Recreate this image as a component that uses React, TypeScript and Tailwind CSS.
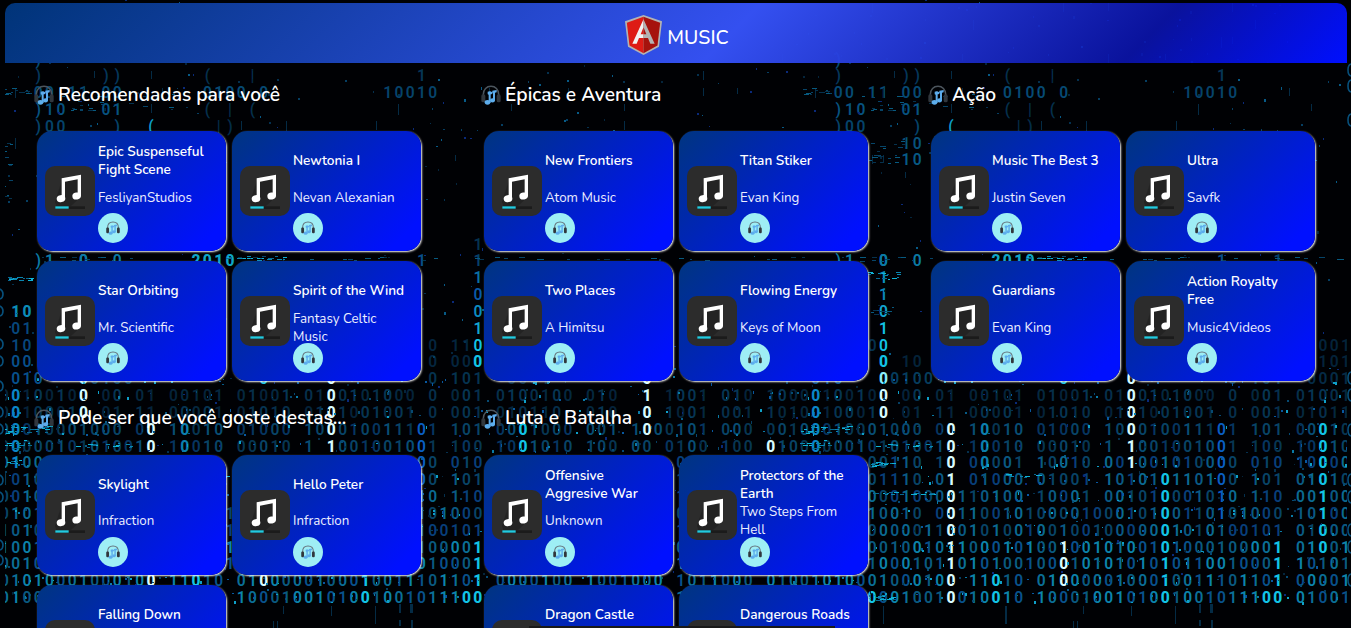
import React from "react";

type Track = { title: string; artist: string };
type Section = { name: string; tracks: Track[] };

const sections: Section[] = [
  {
    name: "Recomendadas para você",
    tracks: [
      { title: "Epic Suspenseful Fight Scene", artist: "FesliyanStudios" },
      { title: "Newtonia I", artist: "Nevan Alexanian" },
      { title: "Star Orbiting", artist: "Mr. Scientific" },
      { title: "Spirit of the Wind", artist: "Fantasy Celtic Music" },
    ],
  },
  {
    name: "Épicas e Aventura",
    tracks: [
      { title: "New Frontiers", artist: "Atom Music" },
      { title: "Titan Stiker", artist: "Evan King" },
      { title: "Two Places", artist: "A Himitsu" },
      { title: "Flowing Energy", artist: "Keys of Moon" },
    ],
  },
  {
    name: "Ação",
    tracks: [
      { title: "Music The Best 3", artist: "Justin Seven" },
      { title: "Ultra", artist: "Savfk" },
      { title: "Guardians", artist: "Evan King" },
      { title: "Action Royalty Free", artist: "Music4Videos" },
    ],
  },
  {
    name: "Pode ser que você goste destas...",
    tracks: [
      { title: "Skylight", artist: "Infraction" },
      { title: "Hello Peter", artist: "Infraction" },
      { title: "Falling Down", artist: "" },
    ],
  },
  {
    name: "Luta e Batalha",
    tracks: [
      { title: "Offensive Aggresive War", artist: "Unknown" },
      { title: "Protectors of the Earth", artist: "Two Steps From Hell" },
      { title: "Dragon Castle", artist: "" },
      { title: "Dangerous Roads", artist: "" },
    ],
  },
];

/* ---------- binary rain backdrop ---------- */

const PITCH_X = 11.27;
const PITCH_Y = 16.83;
const BASE_Y = 395.5;
const TILE = 800;

const rows: string[] = [
  "001001" + "00 00 01 00101 01001 0100101000 0 " + "001 0100100 010  1 1001 010 100",
  "001000" + "10 01 11 00001 01010 0101001001 0 " + "001 010110  010  0 1001 001 101",
  "000100" + "01000 00 10010 01000 100010011101 " + "101 0001000 001 1000101 000 001",
  "000001" + "01010010 10010 00010 1 1001001001 " + "100 1001010 100 00 0100 100 010",
  "010010" + "00110 10 00001 10010 001001010000 " + "010 1000010 0100100 0100101 001",
  "101010" + "01110 01 01000 01001 101010110100 " + "101 0101001 0010110 1001011 010",
  "001001" + "00010000110100 10001 001010001010 " + "110 0010011 0100010 1001001 110",
  "010100" + "10010 0011001010000100010100110101" + "000 1010011 0101000 0110101 000",
  "101001" + "0000011001010010010010000001010100" + "101 0100011 0100010 1001001 101",
  "100100" + "0010010110001010010010100101000100" + "001 0100110 1010011 0100101 001",
  "001010" + "1000101101010010001010101010110010" + "001 1010101 0010110 1001001 001",
  "010100" + "01000100 11010 0100000100010011101" + "101 0000100 1001000 1011000 010",
  "010001" + "00010010010010 1000100101001001011" + "100 0100101 0010110 1001010 100",
];

type Cell = { c: number; r: number; ch: string; color: string; bold?: boolean };

const WHITE = "#d8fbff";
const CYAN = "#12c4e6";
const BLUE = "#0a5fc4";

const highlights: { c: number; from: number; to: number; color: string }[] = [
  { c: 13, from: 3, to: 13, color: WHITE },
  { c: 23, from: 10, to: 12, color: WHITE },
  { c: 29, from: 1, to: 5, color: WHITE },
  { c: 57, from: 1, to: 3, color: WHITE },
  { c: 7, from: 1, to: 2, color: WHITE },
  { c: 68, from: 4, to: 4, color: WHITE },
  { c: 32, from: 6, to: 13, color: CYAN },
  { c: 46, from: 3, to: 10, color: CYAN },
  { c: 37, from: 3, to: 8, color: BLUE },
  { c: 17, from: 12, to: 13, color: CYAN },
  { c: 42, from: 10, to: 13, color: CYAN },
  { c: 41, from: 13, to: 13, color: CYAN },
  { c: 1, from: 1, to: 5, color: "#0a86c8" },
  { c: 16, from: 3, to: 5, color: "#0b7fae" },
  { c: 6, from: 13, to: 13, color: CYAN },
];

const hash = (a: number, b: number) => {
  const v = Math.sin(a * 127.1 + b * 311.7) * 43758.5453;
  return v - Math.floor(v);
};

const shades: string[][] = [
  ["#05283f", "#062f4b", "#063553", "#05233a"],
  ["#073652", "#084467", "#084e75", "#063560"],
  ["#084467", "#0a5a84", "#0b6a92", "#083f7a"],
  ["#0a5a80", "#0b6f97", "#0c84ac", "#08528c"],
];

const cells: Cell[] = [];
rows.forEach((line, i) => {
  const r = i + 1;
  const level = r <= 2 ? 0 : r <= 4 ? 1 : r <= 9 ? 2 : 3;
  for (let c = 0; c < line.length; c++) {
    if (line[c] === " ") continue;
    const h = highlights.find((k) => k.c === c && r >= k.from && r <= k.to);
    const color = h ? h.color : shades[level][Math.floor(hash(c, r) * 4)];
    cells.push({ c, r, ch: line[c], color, bold: !!h && h.color !== BLUE });
  }
});

const run = (c: number, r: number, text: string, color: string, bold = false) => {
  text.split("").forEach((ch, i) => {
    if (ch !== " ") cells.push({ c: c + i, r, ch, color, bold });
  });
};

run(7, -7, "0", "#0a7fb5");
run(7, -6, "1", "#0c93c4");
run(7, -5, "1", "#0c86bb");
run(7, -4, "0", "#12a5d2");
run(7, -3, "1", CYAN);
run(7, -2, "0", CYAN);
run(7, -1, "0", CYAN, true);
run(7, 0, "0", "#8beefa", true);
run(42, -8, "1", "#053350");
run(42, -7, "1", "#06406a");
run(42, -6, "1", "#0a6fa5");
run(42, -5, "0", "#0a5aa8");
run(42, -4, "0", "#0c8cc0");
run(42, -3, "1", "#12a5d2");
run(42, -2, "0", CYAN);
run(42, -1, "0", CYAN, true);
run(40, -2, "11", "#04253e");
run(40, -1, "00", "#04253e");
run(38, -2, "0", "#04253e");
run(38, -1, "0", "#04253e");
run(38, 0, "0 101", "#053350");
run(1, -4, "10", "#0c8cb8", true);
run(1, -3, "01", "#07477c");
run(1, -2, "10", "#07477c");
run(1, -1, "00", "#07508c");
run(1, 0, "010", "#07508c");
run(46, -2, "001", "#04233a");
run(46, -1, "101", "#04233a");
run(45, 0, "0001", "#052b46");
run(8, 0, "0100", "#063d5e");
run(9, -1, "10", "#04233a");
run(6, -2, "0", "#06304b");
run(23, 0, "0", CYAN);
run(29, 0, "0", WHITE, true);
run(57, 0, "0", WHITE, true);
run(3, -19, ")", "#074a75");
run(3, -18, ")     ))", "#05365a");
run(3, -17, "00 11 00", "#064a74");
run(18, -17, "0100 0", "#064a74");
run(34, -17, "10010", "#06436a");
run(3, -16, ")10   01", "#075380");
run(18, -16, "( | (", "#05304c");
run(3, -15, ")00    )", "#05436a");
run(19, -15, "|)", "#042c48");
run(13, -15, "(", "#0c9cc8");
run(9, -14, "10", "#07537c");
run(9, -13, "10", "#075a86");
run(3, -7, ")1  0  0", "#0b7aa4");
run(17, -7, "2010", "#0fa6c8", true);
run(37, -7, "1", "#074e8c");
run(37, -18, "1", "#053556");
run(22, -18, "|", "#042c48");
run(18, -18, "(", "#05304c");

type Dash = { x: number; y: number; w: number; h: number; color: string };
const dashes: Dash[] = [];
const dashColors = ["#053e62", "#04253c", "#075a86", "#04304e", "#0a2a7a"];

/* sparse specks over the whole tile */
for (let i = 0; i < 620; i++) {
  dashes.push({
    x: Math.round(hash(i, 1) * TILE),
    y: Math.round(hash(i, 2) * 600),
    w: 1 + Math.round(hash(i, 3) * 1.4),
    h: 1 + Math.round(hash(i, 4) * 1.6),
    color: dashColors[Math.floor(hash(i, 5) * 5)],
  });
}
/* short vertical traces in the upper area */
for (let i = 0; i < 60; i++) {
  const y = BASE_Y - (12 + Math.floor(hash(i, 12) * 12)) * PITCH_Y;
  dashes.push({
    x: Math.round(4 + Math.floor(hash(i, 11) * 70) * PITCH_X),
    y: Math.round(y - 5),
    w: 1,
    h: 6 + Math.round(hash(i, 13) * 5),
    color: "#042b45",
  });
}
/* partially decoded glyph fragments among the digit rows */
for (let i = 0; i < 520; i++) {
  const r = Math.floor(hash(i, 91) * 14);
  const c = Math.floor(hash(i, 92) * 71);
  dashes.push({
    x: Math.round(1 + c * PITCH_X + hash(i, 93) * 8),
    y: Math.round(BASE_Y + (r - 1) * PITCH_Y - 5 + hash(i, 94) * 10),
    w: 1 + Math.round(hash(i, 95) * 1.5),
    h: 1 + Math.round(hash(i, 96) * 2),
    color: ["#0a7aa6", "#0858a0", "#064a72", "#0fa0c8"][Math.floor(hash(i, 97) * 4)],
  });
}
/* horizontal glitch clusters */
const cluster = (x: number, y: number, w: number, h: number, n: number, seed: number, bright: boolean) => {
  for (let i = 0; i < n; i++) {
    dashes.push({
      x: Math.round(x + hash(i, seed) * w),
      y: Math.round(y + hash(i, seed + 1) * h),
      w: 2 + Math.round(hash(i, seed + 2) * 4),
      h: 1,
      color: bright ? ["#0fb3d6", "#0a86b0", "#086a94"][i % 3] : ["#075a80", "#064468", "#05324e"][i % 3],
    });
  }
};
cluster(0, 425, 48, 8, 26, 21, true);
cluster(0, 440, 30, 10, 14, 24, true);
cluster(72, 443, 60, 5, 14, 27, true);
cluster(0, 460, 24, 4, 12, 31, true);
cluster(70, 462, 24, 4, 16, 34, true);
cluster(70, 492, 66, 2, 16, 37, true);
cluster(205, 474, 32, 3, 9, 39, true);
cluster(5, 277, 26, 3, 16, 41, true);
cluster(60, 272, 40, 8, 14, 44, true);
cluster(60, 306, 36, 8, 10, 47, false);
cluster(0, 88, 34, 8, 12, 51, false);
cluster(0, 140, 10, 60, 14, 54, false);
cluster(68, 140, 36, 24, 20, 57, false);
cluster(0, 256, 800, 5, 50, 61, false);
cluster(225, 256, 62, 4, 20, 81, true);
cluster(60, 90, 130, 20, 16, 67, false);
cluster(70, 108, 22, 2, 8, 84, false);
cluster(60, 595, 36, 5, 14, 75, true);

/* areas the cards hide completely */
const covered: [number, number, number, number][] = [
  [37, 227, 131, 251],
  [232, 422, 131, 251],
  [484, 674, 131, 251],
  [679, 869, 131, 251],
  [931, 1121, 131, 251],
  [1126, 1316, 131, 251],
  [37, 227, 261, 381],
  [232, 422, 261, 381],
  [484, 674, 261, 381],
  [679, 869, 261, 381],
  [931, 1121, 261, 381],
  [1126, 1316, 261, 381],
  [37, 227, 455, 575],
  [232, 422, 455, 575],
  [484, 674, 455, 575],
  [679, 869, 455, 575],
  [37, 227, 585, 640],
  [484, 674, 585, 640],
  [679, 869, 585, 640],
];

const isCovered = (x: number, y: number) =>
  covered.some(([x1, x2, y1, y2]) => x - 3 > x1 && x + 3 < x2 && y - 5 > y1 && y + 5 < y2);

function BinaryTile({ offset }: { offset: number }) {
  return (
    <g transform={`translate(${offset} 0)`}>
      {cells.map((k, i) => {
        const x = 4.5 + k.c * PITCH_X;
        const y = BASE_Y + (k.r - 1) * PITCH_Y;
        if (x + offset > 1350 || isCovered(x + offset, y)) return null;
        return (
          <text key={i} x={x} y={y + 5.6} fill={k.color} fontWeight={k.bold ? 800 : 600}>
            {k.ch}
          </text>
        );
      })}
      {dashes.map((d, i) =>
        d.x + offset > 1350 || isCovered(d.x + offset, d.y) ? null : (
          <rect key={i} x={d.x} y={d.y} width={d.w} height={d.h} fill={d.color} />
        ),
      )}
      <g fill="#042b45">
        <rect x="83" y="606" width="1" height="18" />
        <rect x="205" y="606" width="2" height="18" />
        <rect x="283" y="606" width="1" height="8" />
        <rect x="331" y="606" width="1" height="10" />
        <rect x="375" y="606" width="1" height="18" />
        <path d="M399 604h2v9h-2zM399 620h2v6h-2zM410 604h3v9h-3zM411 620h2v8h-2z" />
        <path d="M273 621h1v7h-1zM277 621h1v7h-1z" />
      </g>
    </g>
  );
}

function Backdrop() {
  return (
    <svg
      className="pointer-events-none absolute inset-0"
      width="1351"
      height="628"
      viewBox="0 0 1351 628"
      aria-hidden="true"
      fontFamily="Roboto, 'Open Sans', sans-serif"
      fontSize="15.6"
      textAnchor="middle"
    >
      <defs>
        <clipPath id="inner">
          <rect x="5" y="0" width="1342" height="628" />
        </clipPath>
      </defs>
      <rect width="1351" height="628" fill="#000104" />
      <g clipPath="url(#inner)">
        <BinaryTile offset={0} />
        <BinaryTile offset={800} />
      </g>
      <g fill="none" stroke="#07507c" strokeWidth="1.6">
        {[70, 86, 120, 378, 395, 430, 480, 497, 530, 547, 580].map((y) => (
          <path key={y} d={`M1351 ${y - 6}q-3 1 -3 6q0 5 3 6`} />
        ))}
        {[294, 311, 344, 361, 386, 412, 429, 480, 497, 545, 560].map((y) => (
          <path key={y} d={`M0 ${y - 5}q3 2 3 5q0 4 -3 5`} />
        ))}
      </g>
    </svg>
  );
}

/* ---------- icons ---------- */

function HeadphonesIcon({ className, band }: { className: string; band: string }) {
  return (
    <svg viewBox="0 0 60 60" className={className} aria-hidden="true">
      <path d="M7 34V28C7 13 17 4 30 4s23 9 23 24v6" fill="none" stroke={band} strokeWidth="4.500" />
      <rect x="1" y="28" width="12" height="24" rx="5" fill="#31373d" />
      <rect x="47" y="28" width="12" height="24" rx="5" fill="#31373d" />
      <g fill="#5dadec">
        <path d="M20 20l9-2v35h-6V28h-3z" />
        <path d="M22 22l12-2v7l-12 2z" />
        <path d="M34 17l13-2v7l-5 1v24h-6V24h-2z" />
        <ellipse cx="19.500" cy="52" rx="8.500" ry="7" />
        <ellipse cx="34.500" cy="46" rx="7.500" ry="6.500" />
      </g>
    </svg>
  );
}

function AngularLogo() {
  return (
    <svg viewBox="0 0 111 120" className="mt-1 h-[40px] w-[37px]" aria-hidden="true">
      <path d="M55.500 0L111 19l-9 76-46.500 25L9 95 0 19z" fill="#b3b3b3" />
      <path d="M55.500 5.500L5.500 23l8 68.500 42 23z" fill="#de1b16" />
      <path d="M55.500 5.500L105.500 23l-8 68.500-42 23z" fill="#a6120d" />
      <path d="M55.500 13L22 86h13l7-17h13.500V58H47l8.500-21z" fill="#f2f2f2" />
      <path d="M55.500 13L89 86H76l-7-17H55.500V58H64l-8.500-21z" fill="#b3b3b3" />
    </svg>
  );
}

function CoverArt() {
  return (
    <svg viewBox="0 0 150 150" className="h-[50px] w-[50px] shrink-0" aria-hidden="true">
      <rect width="150" height="150" rx="30" fill="#2c2c2c" />
      <path d="M30 108L52 40l56-12v64l-30 28H34z" fill="#232323" />
      <path d="M50 37l58-11v64h-10V40L60 47v51H50z" fill="#ffffff" />
      <ellipse cx="48" cy="98" rx="13" ry="10.500" transform="rotate(-12 48 98)" fill="#ffffff" />
      <ellipse cx="95" cy="90" rx="13" ry="10.500" transform="rotate(-12 95 90)" fill="#ffffff" />
      <rect x="31" y="121" width="89" height="8" fill="#1b1b1b" />
      <rect x="31" y="121" width="40" height="7" fill="#22cbe0" />
    </svg>
  );
}

/* ---------- page ---------- */

function TrackCard({ track }: { track: Track }) {
  return (
    <article className="flex h-[120px] w-[189px] rounded-[15px] bg-[linear-gradient(135deg,#003580_0%,#0010ff_90%)] pl-2 shadow-[1px_1px_2px_#f5f5f5]">
      <div className="pt-[35px]">
        <CoverArt />
      </div>
      <div className="ml-[3px] flex w-[119px] flex-col pt-3 leading-[18px] text-white">
        <div className="flex h-9 items-center">
          <h3 className="text-[13.6px] font-semibold">{track.title}</h3>
        </div>
        <div className="mt-[3px] flex h-[31px] items-center">
          <p className="text-[13.33px] text-[#eceeff]">{track.artist}</p>
        </div>
        <button
          type="button"
          aria-label="Ouvir"
          className="flex h-[30px] w-[30px] shrink-0 items-center justify-center rounded-full bg-[#9eeef5]"
        >
          <HeadphonesIcon className="h-[14px] w-[14px]" band="#66757f" />
        </button>
      </div>
    </article>
  );
}

function PlaylistSection({ section }: { section: Section }) {
  return (
    <section className="h-[323.5px] pl-8">
      <h2 className="-ml-[3px] flex h-[62px] items-center gap-1 pt-[2px] text-[19.2px] font-semibold text-white">
        <HeadphonesIcon className="h-5 w-5 shrink-0" band="#4c565e" />
        <span>{section.name}</span>
      </h2>
      <div className="mt-[6px] grid grid-cols-[189px_189px] gap-x-[6px] gap-y-[10px]">
        {section.tracks.map((t) => (
          <TrackCard key={t.title} track={t} />
        ))}
      </div>
    </section>
  );
}

export default function App() {
  return (
    <div className="relative h-[628px] w-full overflow-hidden bg-black font-['Nunito','Lato',sans-serif]">
      <Backdrop />
      <div className="relative mx-[5px] w-[1342px] pt-[3px]">
        <header className="flex h-[60px] items-center justify-center gap-[5px] rounded-t-[10px] bg-[linear-gradient(135deg,#003478_0%,#3450f0_54%,rgba(12,22,190,0.82)_84%,#000fff_100%)] pl-[2px] text-white">
          <AngularLogo />
          <span className="pt-[9px] text-[19.5px] font-medium">MUSIC</span>
        </header>
        <main className="grid grid-cols-[447px_447px_447px]">
          {sections.map((s) => (
            <PlaylistSection key={s.name} section={s} />
          ))}
        </main>
      </div>
      <div className="absolute bottom-0 left-[529px] h-[2px] w-[306px] bg-[#191919]" />
    </div>
  );
}
